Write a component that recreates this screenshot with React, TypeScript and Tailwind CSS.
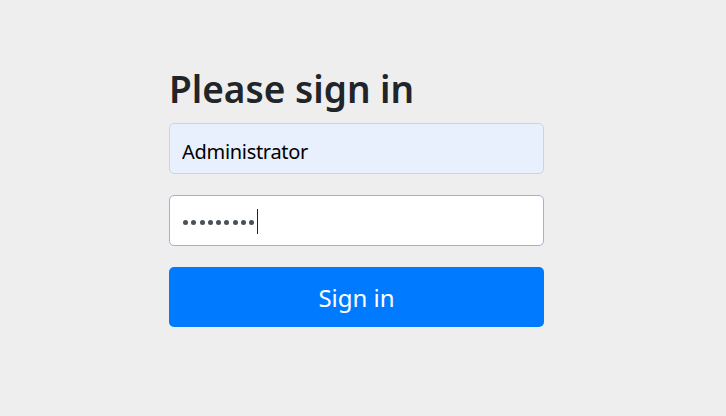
export default function App() {
  return (
    <div className="min-h-[416px] bg-[#eeeeee] font-['Noto_Sans',sans-serif] text-[#212529]">
      <form className="ml-[169px] flex w-[375px] flex-col pt-[67px]">
        <h1 className="mb-[12px] text-[37px] font-semibold leading-[1.2]">Please sign in</h1>
        <input
          readOnly
          value="Administrator"
          className="h-[51px] rounded-[5px] border border-[#ced4da] bg-[#e8f0fe] px-3 pt-[6px] text-[20px] tracking-[-0.3px] text-black outline-none"
        />
        <div className="mt-[21px] flex h-[51px] items-center gap-[3.3px] rounded-[5px] border border-[#86b7fe] bg-white pl-[13px] pt-[4px]">
          {Array.from({ length: 9 }).map((_, i) => (
            <span key={i} className="h-[5px] w-[5px] rounded-full bg-[#495057]" />
          ))}
          <span className="-ml-[1px] mb-[3px] h-[25px] w-px bg-[#222]" />
        </div>
        <button
          type="button"
          className="mt-[21px] h-[60px] rounded-[5px] bg-[#007bff] pt-[2px] text-[24px] text-white"
        >
          Sign in
        </button>
      </form>
    </div>
  );
}
